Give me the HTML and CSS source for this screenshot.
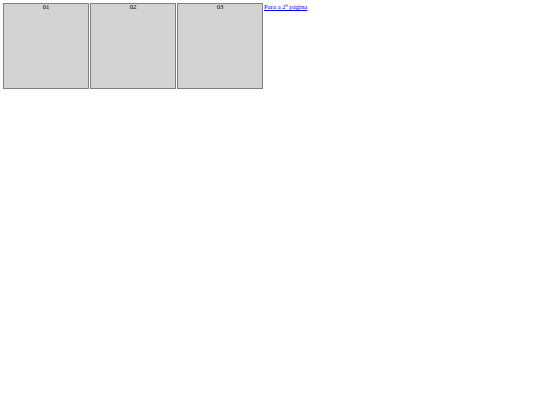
FILE: index.html
```html
<!DOCTYPE html>
<html>
<head>
<meta charset="utf-8">
<link rel="stylesheet" href="styles.css">
</head>
<body>
<div class="row">
  <div class="box">01</div>
  <div class="box">02</div>
  <div class="box">03</div>
  <a class="next" href="#">Para a 2ª página</a>
</div>
</body>
</html>
```

FILE: styles.css
```css
html, body {
  margin: 0;
  background: #fff;
}
body {
  padding: 3px;
  font-family: "Liberation Serif", "Times New Roman", serif;
  font-size: 6.75px;
  line-height: 1;
  color: #000;
}
.row {
  display: flex;
  align-items: baseline;
  gap: 1px;
}
.box {
  box-sizing: border-box;
  width: 86px;
  height: 86px;
  border: 1px solid #808080;
  background: #d3d3d3;
  text-align: center;
}
.next {
  color: #0000ee;
  text-decoration: underline;
}
```
